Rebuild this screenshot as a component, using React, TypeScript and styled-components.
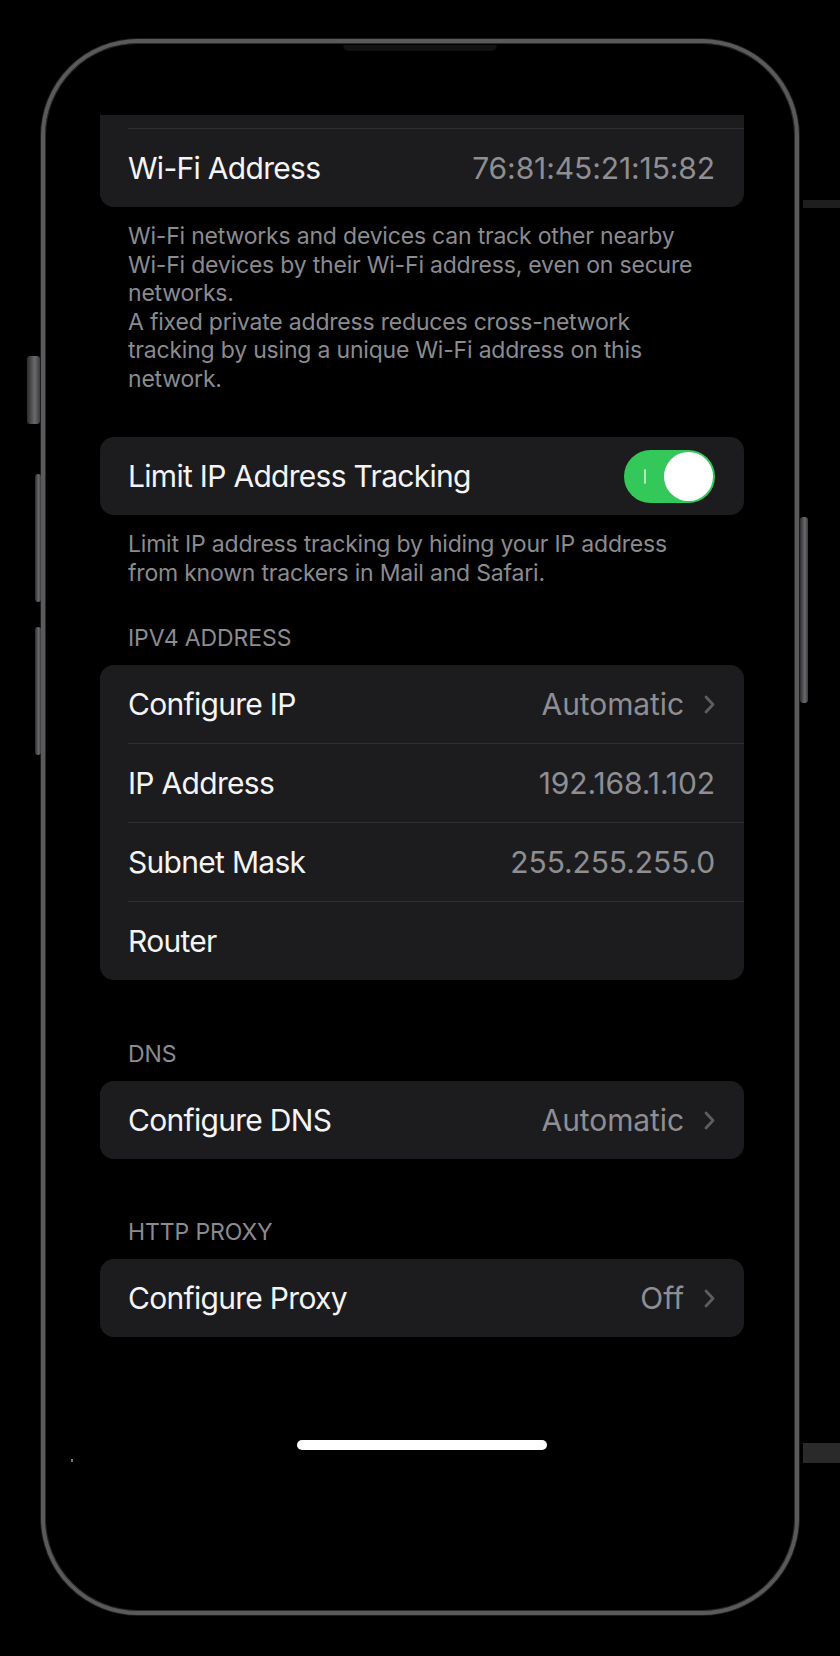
import React from 'react'
import styled, { createGlobalStyle } from 'styled-components'

const GlobalStyle = createGlobalStyle`
  html, body {
    margin: 0;
    padding: 0;
    background: #000;
  }
  body {
    font-family: Inter, "Noto Sans", "Liberation Sans", sans-serif;
    -webkit-font-smoothing: antialiased;
  }
`

const Stage = styled.div`
  position: relative;
  width: 840px;
  height: 1656px;
  box-sizing: border-box;
  padding: 39px 0 0 41px;
  background: #000;
  overflow: hidden;
`

const EdgeGlint = styled.div<{ $top: number; $h: number; $color: string }>`
  position: absolute;
  right: 0;
  top: ${(p) => p.$top}px;
  width: 37px;
  height: ${(p) => p.$h}px;
  background: ${(p) => p.$color};
`

const Phone = styled.div`
  position: relative;
  width: 758px;
  height: 1576px;
  box-sizing: border-box;
  border: 4px solid #5a5a5c;
  border-radius: 97px;
  background: #000;
  box-shadow: 0 0 0 1px #1c1c1c, inset 0 0 0 1px #2a2a2a;
`

const SideButton = styled.div<{ $left?: number; $right?: number; $top: number; $h: number; $w: number }>`
  position: absolute;
  top: ${(p) => p.$top}px;
  ${(p) => (p.$left !== undefined ? `left: ${p.$left}px;` : `right: ${p.$right}px;`)}
  width: ${(p) => p.$w}px;
  height: ${(p) => p.$h}px;
  border-radius: 3px;
  background: linear-gradient(90deg, #2c2c2e, #6a6a6c 60%, #3a3a3c);
`

const Speaker = styled.div`
  position: absolute;
  top: 2px;
  left: 298px;
  width: 154px;
  height: 6px;
  border-radius: 0 0 6px 6px;
  background: #111;
`

const Speck = styled.div`
  position: absolute;
  left: 26px;
  top: 1416px;
  width: 2px;
  height: 3px;
  background: #777;
`

const Screen = styled.div`
  display: flex;
  flex-direction: column;
  padding: 72px 51px 0 55px;
  color: #fff;
`

const Card = styled.div<{ $clipped?: boolean; $mt?: number }>`
  display: flex;
  flex-direction: column;
  background: #1c1c1e;
  border-radius: ${(p) => (p.$clipped ? '0 0 14px 14px' : '14px')};
  margin-top: ${(p) => p.$mt ?? 0}px;
`

const ClippedStrip = styled.div`
  height: 13px;
`

const Row = styled.div`
  display: flex;
  align-items: center;
  justify-content: space-between;
  height: 78px;
  padding: 0 29px 0 28px;
`

const Divider = styled.div`
  height: 1px;
  margin-left: 28px;
  background: #2e2e31;
`

const Label = styled.span`
  font-size: 30px;
  letter-spacing: -0.7px;
  color: #f4f4f6;
`

const ValueGroup = styled.span`
  display: flex;
  align-items: center;
  gap: 20px;
`

const Value = styled.span`
  font-size: 30px;
  letter-spacing: -0.1px;
  color: #8e8e93;
`

const Footer = styled.div`
  padding: 15px 28px 0 28px;
  font-size: 23px;
  line-height: 28.5px;
  letter-spacing: -0.2px;
  color: #8b8b90;
`

const SectionHeader = styled.div<{ $mt: number }>`
  margin-top: ${(p) => p.$mt}px;
  padding: 0 28px;
  font-size: 23px;
  line-height: 28px;
  letter-spacing: -0.1px;
  text-transform: uppercase;
  color: #8b8b90;
`

const SwitchTrack = styled.div`
  position: relative;
  display: flex;
  justify-content: flex-end;
  align-items: center;
  width: 91px;
  height: 53px;
  box-sizing: border-box;
  padding: 2px;
  border-radius: 27px;
  background: #34c759;
`

const SwitchMark = styled.span`
  position: absolute;
  left: 20px;
  top: 19px;
  width: 2px;
  height: 15px;
  border-radius: 1px;
  background: rgba(255, 255, 255, 0.6);
`

const SwitchKnob = styled.span`
  width: 49px;
  height: 49px;
  border-radius: 50%;
  background: #fff;
`

const HomeIndicator = styled.div`
  align-self: center;
  width: 250px;
  height: 10px;
  margin-top: 103px;
  border-radius: 5px;
  background: #fff;
`

const Chevron = () => (
  <svg width="11" height="19" viewBox="0 0 11 19" fill="none">
    <path d="M2 2 L9 9.5 L2 17" stroke="#5c5c61" strokeWidth="2.8" strokeLinecap="round" strokeLinejoin="round" />
  </svg>
)

const Switch = () => (
  <SwitchTrack>
    <SwitchMark />
    <SwitchKnob />
  </SwitchTrack>
)

interface ItemProps {
  label: string
  value?: string
  chevron?: boolean
}

const Item: React.FC<ItemProps> = ({ label, value, chevron }) => (
  <Row>
    <Label>{label}</Label>
    <ValueGroup>
      {value && <Value>{value}</Value>}
      {chevron && <Chevron />}
    </ValueGroup>
  </Row>
)

const ipv4 = [
  { label: 'Configure IP', value: 'Automatic', chevron: true },
  { label: 'IP Address', value: '192.168.1.102' },
  { label: 'Subnet Mask', value: '255.255.255.0' },
  { label: 'Router' },
]

export default function App() {
  return (
    <>
      <GlobalStyle />
      <Stage>
        <EdgeGlint $top={200} $h={8} $color="#1e1e1e" />
        <EdgeGlint $top={1443} $h={20} $color="#2a2a2a" />
        <Phone>
          <SideButton $left={-18} $top={313} $h={68} $w={13} />
          <SideButton $left={-10} $top={431} $h={128} $w={6} />
          <SideButton $left={-10} $top={584} $h={128} $w={6} />
          <SideButton $right={-13} $top={474} $h={186} $w={8} />
          <Speaker />
          <Speck />
          <Screen>
            <Card $clipped>
              <ClippedStrip />
              <Divider />
              <Item label="Wi-Fi Address" value="76:81:45:21:15:82" />
            </Card>
            <Footer>
              Wi-Fi networks and devices can track other nearby
              <br />
              Wi-Fi devices by their Wi-Fi address, even on secure
              <br />
              networks.
              <br />
              A fixed private address reduces cross-network
              <br />
              tracking by using a unique Wi-Fi address on this
              <br />
              network.
            </Footer>

            <Card $mt={44}>
              <Row>
                <Label>Limit IP Address Tracking</Label>
                <Switch />
              </Row>
            </Card>
            <Footer>
              Limit IP address tracking by hiding your IP address
              <br />
              from known trackers in Mail and Safari.
            </Footer>

            <SectionHeader $mt={37}>IPv4 Address</SectionHeader>
            <Card $mt={13}>
              {ipv4.map((row, i) => (
                <React.Fragment key={row.label}>
                  {i > 0 && <Divider />}
                  <Item {...row} />
                </React.Fragment>
              ))}
            </Card>

            <SectionHeader $mt={60}>DNS</SectionHeader>
            <Card $mt={13}>
              <Item label="Configure DNS" value="Automatic" chevron />
            </Card>

            <SectionHeader $mt={59}>HTTP Proxy</SectionHeader>
            <Card $mt={13}>
              <Item label="Configure Proxy" value="Off" chevron />
            </Card>

            <HomeIndicator />
          </Screen>
        </Phone>
      </Stage>
    </>
  )
}
